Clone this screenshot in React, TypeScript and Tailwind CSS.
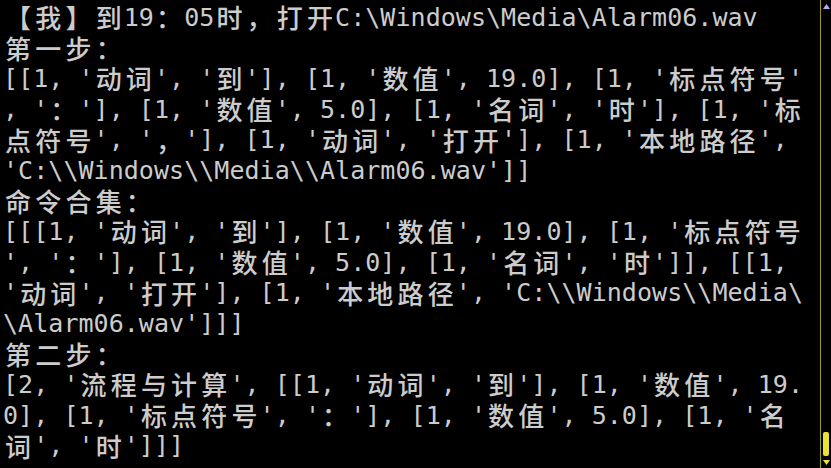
const lines = [
  '【我】到19：05时，打开C:\\Windows\\Media\\Alarm06.wav',
  '第一步：',
  "[[1, '动词', '到'], [1, '数值', 19.0], [1, '标点符号'",
  ", '：'], [1, '数值', 5.0], [1, '名词', '时'], [1, '标",
  "点符号', '，'], [1, '动词', '打开'], [1, '本地路径', ",
  "'C:\\\\Windows\\\\Media\\\\Alarm06.wav']]",
  '命令合集：',
  "[[[1, '动词', '到'], [1, '数值', 19.0], [1, '标点符号",
  "', '：'], [1, '数值', 5.0], [1, '名词', '时']], [[1, ",
  "'动词', '打开'], [1, '本地路径', 'C:\\\\Windows\\\\Media\\",
  "\\Alarm06.wav']]]",
  '第二步：',
  "[2, '流程与计算', [[1, '动词', '到'], [1, '数值', 19.",
  "0], [1, '标点符号', '：'], [1, '数值', 5.0], [1, '名",
  "词', '时']]]",
];

// console cells: half-width 15.1px, CJK takes two
const narrow = 'inline-block w-[15.1px] text-center font-["DejaVu_Sans_Mono",monospace] text-[25px]';
const wide = 'inline-block w-[30.2px] text-center font-["Noto_Sans_CJK_SC",sans-serif] font-medium text-[26px]';

function Line({ text }: { text: string }) {
  const chars = Array.from(text);
  return (
    <div className="h-[30.6px] flex items-center whitespace-pre leading-none">
      {chars.map((c, i) => (
        <span key={i} className={c.codePointAt(0)! > 0x2e7f ? wide : narrow}>
          {c}
        </span>
      ))}
    </div>
  );
}

export default function App() {
  return (
    <div className="w-[831px] h-[468px] bg-black flex overflow-hidden text-[#cccccc]">
      <div className="flex-1 pl-[3px] pt-[2px]">
        {lines.map((l, i) => (
          <Line key={i} text={l} />
        ))}
      </div>
      <div className="w-[11px] ml-[1px] border-l border-[#9c9a1c] flex flex-col items-center justify-between pt-[4px] pb-[3px]">
        <svg width="7" height="5" viewBox="0 0 7 5">
          <path d="M3.5 0 L7 5 L0 5 Z" fill="#b8a8f0" />
        </svg>
        <div className="flex flex-col items-center gap-[4px]">
          <div className="w-[6px] h-[24px] rounded-[2px] bg-[#ece232]" />
          <svg width="7" height="5" viewBox="0 0 7 5">
            <path d="M0 0 L7 0 L3.5 5 Z" fill="#ece232" />
          </svg>
        </div>
      </div>
    </div>
  );
}
